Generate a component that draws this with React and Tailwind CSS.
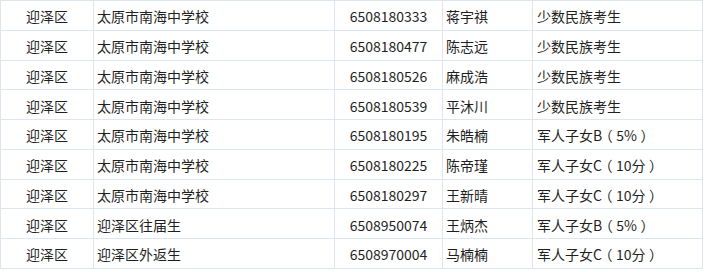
const rows = [
  ['迎泽区', '太原市南海中学校', '6508180333', '蒋宇祺', '少数民族考生'],
  ['迎泽区', '太原市南海中学校', '6508180477', '陈志远', '少数民族考生'],
  ['迎泽区', '太原市南海中学校', '6508180526', '麻成浩', '少数民族考生'],
  ['迎泽区', '太原市南海中学校', '6508180539', '平沐川', '少数民族考生'],
  ['迎泽区', '太原市南海中学校', '6508180195', '朱皓楠', '军人子女B（5%）'],
  ['迎泽区', '太原市南海中学校', '6508180225', '陈帝瑾', '军人子女C（10分）'],
  ['迎泽区', '太原市南海中学校', '6508180297', '王新晴', '军人子女C（10分）'],
  ['迎泽区', '迎泽区往届生', '6508950074', '王炳杰', '军人子女B（5%）'],
  ['迎泽区', '迎泽区外返生', '6508970004', '马楠楠', '军人子女C（10分）'],
];

// fullwidth parens drawn centred in their em box, as the source font does
function Category({ text }) {
  return text.split(/([（）])/).map((part, i) =>
    part === '（' || part === '）' ? (
      <span key={i} className="inline-block w-[14px] text-center [font-feature-settings:'halt']">{part}</span>
    ) : (
      <span key={i}>{part}</span>
    )
  );
}

export default function App() {
  return (
    <div className="w-[705px] h-[272px] overflow-hidden bg-white font-['Noto_Sans_CJK_SC',sans-serif] text-[14px] text-[#1f1f1f]">
      <table className="border-collapse table-fixed w-[703px]">
        <colgroup>
          <col className="w-[93px]" />
          <col className="w-[241px]" />
          <col className="w-[108px]" />
          <col className="w-[90px]" />
          <col className="w-[170px]" />
        </colgroup>
        <tbody>
          {rows.map((r, i) => (
            <tr key={i} className="h-[29.75px]">
              <td className="border border-[#dde6f0] p-0 pt-[2px] text-center leading-none">{r[0]}</td>
              <td className="border border-[#dde6f0] p-0 pt-[2px] pl-[3px] leading-none">{r[1]}</td>
              <td className="border border-[#dde6f0] p-0 pt-[2px] text-center leading-none">{r[2]}</td>
              <td className="border border-[#dde6f0] p-0 pt-[2px] pl-[3px] leading-none">{r[3]}</td>
              <td className="border border-[#dde6f0] p-0 pt-[2px] pl-[4px] leading-none">
                <Category text={r[4]} />
              </td>
            </tr>
          ))}
        </tbody>
      </table>
    </div>
  );
}
